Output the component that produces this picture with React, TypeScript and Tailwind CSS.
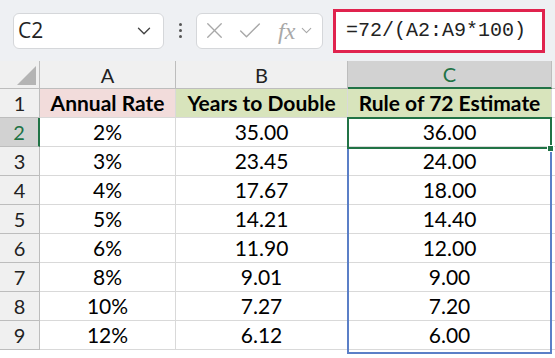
import { ChevronDown, X, Check } from "lucide-react";

const ROWS: [string, string, string][] = [
  ["2%", "35.00", "36.00"],
  ["3%", "23.45", "24.00"],
  ["4%", "17.67", "18.00"],
  ["5%", "14.21", "14.40"],
  ["6%", "11.90", "12.00"],
  ["8%", "9.01", "9.00"],
  ["10%", "7.27", "7.20"],
  ["12%", "6.12", "6.00"],
];

const CELL = "flex items-center justify-center border-r border-b border-[#d9d9d9] text-[21px] text-black";
const HEAD = "flex items-center justify-center border-r border-b border-[#bdbdbd] bg-[#f0f0f0] text-[20px] text-[#222]";

export default function App() {
  return (
    <div
      className="relative w-[555px] h-[358px] overflow-hidden bg-white"
      style={{ fontFamily: "Lato, 'Open Sans', sans-serif" }}
    >
      {/* formula bar */}
      <div className="flex h-[61px] items-center bg-[#eef0f3] pl-[13px]">
        <div className="flex h-[36px] w-[151px] items-center justify-between rounded-[6px] border border-[#d5d7da] bg-white pl-[4px] pr-[8px]">
          <span className="text-[21px] text-[#222]" style={{ fontFamily: "'Open Sans', sans-serif" }}>C2</span>
          <ChevronDown size={22} strokeWidth={1.5} className="text-[#444]" />
        </div>
        <div className="flex w-[32px] flex-col items-center gap-[3px]">
          <span className="h-[3px] w-[3px] rounded-full bg-[#555]" />
          <span className="h-[3px] w-[3px] rounded-full bg-[#555]" />
          <span className="h-[3px] w-[3px] rounded-full bg-[#555]" />
        </div>
        <div className="flex h-[36px] w-[127px] items-center gap-[8px] rounded-[6px] border border-[#d5d7da] bg-white pl-[4px] text-[#a8a8a8]">
          <X size={27} strokeWidth={1.2} />
          <Check size={28} strokeWidth={1.2} />
          <span className="ml-[6px] text-[24px] italic" style={{ fontFamily: "'Liberation Serif', serif" }}>fx</span>
          <ChevronDown size={17} strokeWidth={1.5} className="-ml-[5px]" />
        </div>
        <div className="ml-[10px] flex h-[44px] w-[212px] items-center border-[3px] border-[#e0234e] bg-white pl-[10px] text-[20px] text-[#222]" style={{ fontFamily: "'Liberation Mono', monospace" }}>
          =72/(A2:A9*100)
        </div>
      </div>

      {/* grid */}
      <div className="grid grid-cols-[40px_136px_172px_204px_3px] grid-rows-[28px_repeat(9,29px)]">
        <div className="relative border-r border-b border-[#bdbdbd] bg-[#f0f0f0]">
          <svg className="absolute bottom-[3px] right-[3px]" width="19" height="19" viewBox="0 0 19 19">
            <path d="M19 0 L19 19 L0 19 Z" fill="#b4b4b4" />
          </svg>
        </div>
        <div className={HEAD}>A</div>
        <div className={HEAD}>B</div>
        <div className="flex items-center justify-center border-r border-b-2 border-r-[#bdbdbd] border-b-[#217346] bg-[#d2d2d2] text-[20px] text-[#217346]">C</div>
        <div className="border-b border-[#bdbdbd] bg-[#f0f0f0]" />

        <div className={HEAD}>1</div>
        <div className={`${CELL} bg-[#f2dcdb] font-bold text-[20px]`}>Annual Rate</div>
        <div className={`${CELL} bg-[#d8e4bc] font-bold text-[20px]`}>Years to Double</div>
        <div className={`${CELL} bg-[#d8e4bc] font-bold text-[20px]`}>Rule of 72 Estimate</div>
        <div className="border-b border-[#d9d9d9]" />

        {ROWS.map((r, i) => (
          <>
            <div
              key={`h${i}`}
              className={
                i === 0
                  ? "flex items-center justify-center border-b border-r-2 border-b-[#bdbdbd] border-r-[#217346] bg-[#d2d2d2] text-[20px] text-[#217346]"
                  : HEAD
              }
            >
              {i + 2}
            </div>
            <div key={`a${i}`} className={CELL}>{r[0]}</div>
            <div key={`b${i}`} className={CELL}>{r[1]}</div>
            <div key={`c${i}`} className={CELL}>{r[2]}</div>
            <div key={`e${i}`} className="border-b border-[#d9d9d9]" />
          </>
        ))}
      </div>

      {/* selection range C2:C9 */}
      <div className="pointer-events-none absolute left-[347px] top-[147px] h-[207px] w-[205px] border-2 border-[#5b7fc7]" />
      <div className="pointer-events-none absolute left-[347px] top-[117px] h-[32px] w-[205px] border-2 border-[#217346]" />
      <div className="pointer-events-none absolute left-[547px] top-[145px] h-[7px] w-[7px] border border-white bg-[#217346]" />
    </div>
  );
}
